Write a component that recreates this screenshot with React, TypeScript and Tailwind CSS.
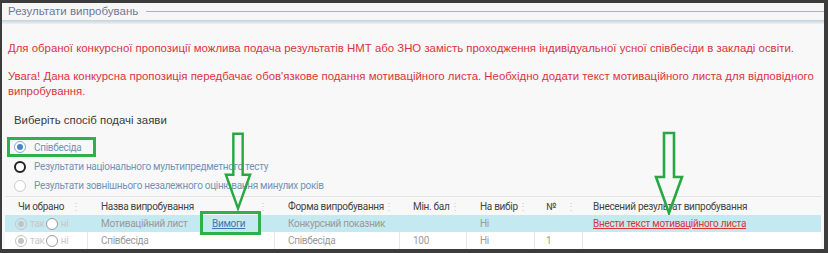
import React from "react";

const cols = [
  { title: "Чи обрано", w: "w-[83px] pl-[13px]" },
  { title: "Назва випробування", w: "w-[187px] pl-[13px]" },
  { title: "Форма випробування", w: "w-[125px] pl-[13px]" },
  { title: "Мін. бал", w: "w-[67px] pl-[13px]" },
  { title: "На вибір", w: "w-[68px] pl-[13px]" },
  { title: "№", w: "w-[48px] pl-[11px]" },
  { title: "Внесений результат випробування", w: "flex-1 pl-[10px]" },
];

const Radio = ({ checked, dark, faded }: { checked?: boolean; dark?: boolean; faded?: boolean }) => (
  <span
    className={`inline-flex items-center justify-center w-[12px] h-[12px] rounded-full border ${
      dark ? "border-[#222] border-[2px]" : faded ? "border-[#ccc]" : "border-[#8aa9c8]"
    } bg-white`}
  >
    {checked && <span className="w-[6px] h-[6px] rounded-full bg-[#4a86c5]" />}
  </span>
);

const YesNo = () => (
  <div className="flex items-center text-[#c8c8c8]">
    <span className="inline-flex items-center justify-center w-[12px] h-[12px] rounded-full border border-[#c4c4c4]">
      <span className="w-[6px] h-[6px] rounded-full bg-[#c4c4c4]" />
    </span>
    <span className="ml-[3px] mr-[1px]">так</span>
    <span className="inline-block w-[12px] h-[12px] rounded-full border border-[#9a9a9a] bg-white" />
    <span className="ml-[3px]">ні</span>
  </div>
);

const Arrow = ({ className }: { className: string }) => (
  <svg className={`absolute ${className}`} viewBox="0 0 30 84" fill="none">
    <path
      d="M10 2 H20 V46 H28 L15 82 L2 46 H10 Z"
      stroke="#27a844"
      strokeWidth="2.6"
      strokeLinejoin="miter"
    />
  </svg>
);

const App = () => {
  return (
    <div className="relative w-[828px] h-[253px] bg-[#3c3c3c] font-['Liberation_Sans',Arial,sans-serif] overflow-hidden">
      <div className="absolute left-[2px] top-[3px] right-[4px] bottom-[4px] bg-[#f8f8f8] flex flex-col">
        <div className="h-[19px] flex items-center pl-[6px] bg-[#f7f6f6]">
          <span className="text-[11.5px] text-[#6b7a99] whitespace-nowrap">Результати випробувань</span>
          <div className="flex-1 ml-[8px] h-[1px] bg-[#a9b4c9]" />
        </div>
        <div className="h-[5px] bg-gradient-to-b from-[#c3d1da] to-[#eef1f2]" />
        <div className="pt-[17px] pl-[6px] text-[#d8353b] text-[11.4px] leading-[15px]">
          <p>
            Для обраної конкурсної пропозиції можлива подача результатів НМТ або ЗНО замість проходження індивідуальної
            усної співбесіди в закладі освіти.
          </p>
          <p className="mt-[13px]">
            Увага! Дана конкурсна пропозиція передбачає обов'язкове подання мотиваційного листа. Необхідно додати текст
            мотиваційного листа для відповідного випробування.
          </p>
        </div>
        <div className="mt-[13px] pl-[12px] text-[11.4px] text-[#3a3a3a]">Виберіть спосіб подачі заяви</div>
        <div className="mt-[8px] pl-[5px] flex flex-col text-[10px] tracking-[-0.3px] text-[#7393b8] font-['Roboto',sans-serif]">
          <div className="flex">
            <div className="flex items-center gap-[8px] h-[20px] pl-[4px] border-[3px] border-[#2fb04a] w-[89px]">
              <Radio checked />
              <span>Співбесіда</span>
            </div>
          </div>
          <div className="flex items-center gap-[8px] h-[19px] pl-[7px]">
            <Radio dark />
            <span>Результати національного мультипредметного тесту</span>
          </div>
          <div className="flex items-center gap-[8px] h-[19px] pl-[7px]">
            <Radio faded />
            <span>Результати зовнішнього незалежного оцінювання минулих років</span>
          </div>
        </div>
        <div className="mx-[3px] mt-[1px] text-[10px] tracking-[-0.3px] font-['Roboto',sans-serif]">
          <div className="flex h-[19px] items-center text-[#444] border-t border-[#e4e4e4]">
            {cols.map((c, i) => (
              <div key={c.title} className={`${c.w} flex items-center justify-between pr-[7px]`}>
                <span className="whitespace-nowrap">{c.title}</span>
                {i < cols.length - 1 && <span className="text-[#b8d9c8] text-[10px]">⋮</span>}
              </div>
            ))}
          </div>
          <div className="flex h-[17px] items-center bg-[#c5e9f0] text-[#9a9a9a]">
            <div className="w-[83px] pl-[10px]"><YesNo /></div>
            <div className="w-[187px] pl-[13px] relative h-full flex items-center">
              <span>Мотиваційний лист</span>
              <span className="absolute left-[112px] top-[-4px] w-[61px] h-[24px] border-[3px] border-[#2fb04a] flex items-center pl-[9px] text-[#3b78b8] underline">
                Вимоги
              </span>
            </div>
            <div className="w-[125px] pl-[13px] whitespace-nowrap">Конкурсний показник</div>
            <div className="w-[67px] pl-[13px]"></div>
            <div className="w-[68px] pl-[13px]">Ні</div>
            <div className="w-[48px] pl-[13px]"></div>
            <div className="flex-1 pl-[10px] text-[#d8353b] underline">Внести текст мотиваційного листа</div>
          </div>
          <div className="flex h-[17px] items-center bg-white text-[#9a9a9a]">
            <div className="w-[83px] pl-[10px] h-full flex items-center border-r border-[#e8e8e8]"><YesNo /></div>
            <div className="w-[187px] pl-[13px] h-full flex items-center border-r border-[#e8e8e8]">Співбесіда</div>
            <div className="w-[125px] pl-[13px] h-full flex items-center border-r border-[#e8e8e8]">Співбесіда</div>
            <div className="w-[67px] pl-[13px] h-full flex items-center border-r border-[#e8e8e8]">100</div>
            <div className="w-[68px] pl-[13px] h-full flex items-center border-r border-[#e8e8e8]">Ні</div>
            <div className="w-[48px] pl-[11px] h-full flex items-center border-r border-[#e8e8e8]">1</div>
            <div className="flex-1" />
          </div>
        </div>
      </div>
      <Arrow className="left-[224px] top-[129px] w-[28px] h-[84px]" />
      <Arrow className="left-[654px] top-[131px] w-[30px] h-[84px]" />
    </div>
  );
};

export default App;
